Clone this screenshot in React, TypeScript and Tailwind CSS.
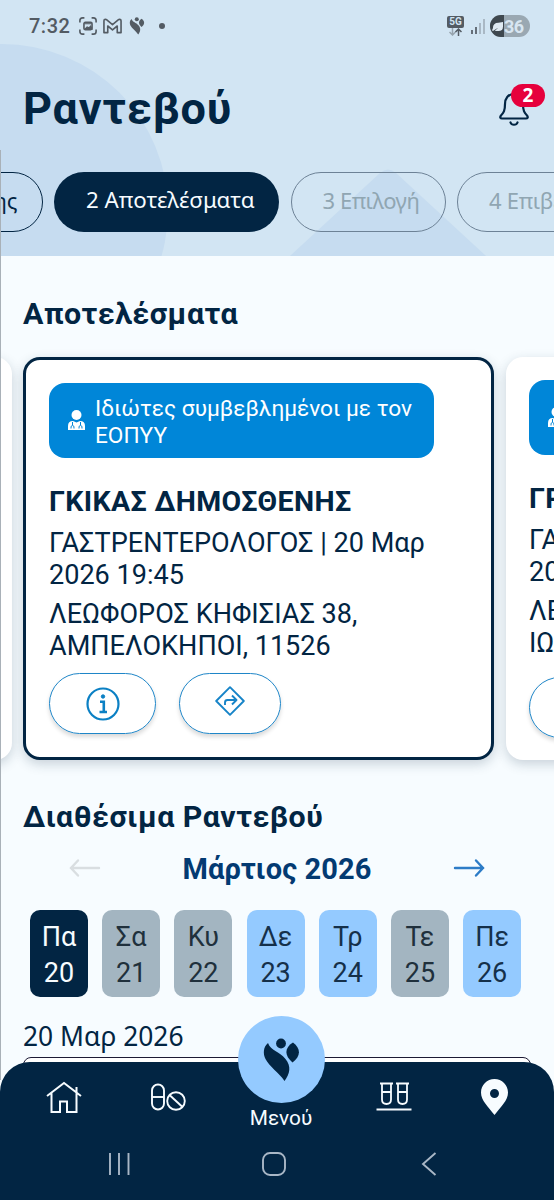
import { clsx } from 'clsx';

const days = [
	{ name: 'Πα', date: 20, state: 'selected' },
	{ name: 'Σα', date: 21, state: 'disabled' },
	{ name: 'Κυ', date: 22, state: 'disabled' },
	{ name: 'Δε', date: 23, state: 'free' },
	{ name: 'Τρ', date: 24, state: 'free' },
	{ name: 'Τε', date: 25, state: 'disabled' },
	{ name: 'Πε', date: 26, state: 'free' },
];

function Logo({ className }: { className: string }) {
	return (
		<svg viewBox="0 0 37 44" className={className} fill="currentColor">
			<circle cx="18" cy="5.500" r="4.900" />
			<path d="M5 5C0 9 0 16 2.500 21c4 8 13 13 19 22C27 36 28.500 28 22.500 21 16 13 8 13 5 5Z" />
			<path d="M30 4.500c-8.500 5-9 13-.5 20 8.500-6.500 8.500-14 .5-20Z" />
		</svg>
	);
}

function StatusBar() {
	return (
		<div className="flex h-[52px] items-center pl-[29px] pr-[24px] text-[#535b63]">
			<span className="w-[50px] text-[20px] font-medium leading-6 tracking-[0.500px]">7:32</span>
			<svg viewBox="0 0 20 20" className="h-[20px] w-[18px]" fill="none" stroke="currentColor" strokeWidth="1.8">
				<path d="M1 6V4q0-3 3-3h2M14 1h2q3 0 3 3v2M19 14v2q0 3-3 3h-2M6 19H4q-3 0-3-3v-2" />
				<rect x="5.500" y="6" width="9" height="8" rx="1.500" />
				<path d="M6 7.500h8M6.500 13.500 9 11l2 1 2-2 1.500 3.500Z" fill="currentColor" strokeWidth="1.200" />
			</svg>
			<svg viewBox="0 0 20 16" className="ml-[6px] h-[16px] w-[19px]" fill="none" stroke="currentColor" strokeWidth="1.700" strokeLinejoin="round">
				<path d="M1 15V2.500Q1 1 2.500 1L4 1.500l6 5 6-5L17.500 1Q19 1 19 2.500V15h-4V8l-5 4-5-4v7Z" />
			</svg>
			<Logo className="ml-[7px] h-[18px] w-[16px]" />
			<span className="ml-[14px] size-[6px] rounded-full bg-[#535b63]" />
			<div className="ml-auto flex items-center">
				<div className="flex h-[21px] w-[17px] flex-col items-center">
					<span className="h-[12px] w-[17px] rounded-[2px] bg-[#535b63] text-center text-[10px] font-bold leading-[12px] text-[#d2e5f3]">5G</span>
					<svg viewBox="0 0 13 8" className="h-[8px] w-[13px]" fill="none" strokeWidth="1.500">
						<path d="M3.500 0v7M.5 4l3 3 3-3" stroke="#97a4ae" />
						<path d="M9.500 8V1M6.500 4l3-3 3 3" stroke="currentColor" />
					</svg>
				</div>
				<svg viewBox="0 0 14 15" className="ml-[7px] h-[15px] w-[14px]" strokeWidth="1.700">
					<path d="M1 15v-4M5 15V8" stroke="#535b63" />
					<path d="M9 15V4M13 15V0" stroke="#a3b1bc" />
				</svg>
				<div className="ml-[5px] flex h-[22px] w-[40px] overflow-hidden rounded-full bg-[#9aa8b2]">
					<div className="flex w-[14px] shrink-0 items-center justify-center bg-[#3f484f]">
						<svg viewBox="0 0 12 12" className="size-[11px] shrink-0" fill="#dfeaf2">
							<path d="M12 1v5q0 5-5 5H3l4-4-6 4-1-1 1-2q0-6 6-6Z" />
						</svg>
					</div>
					<span className="text-[18px] font-bold leading-[23px] tracking-[-0.700px] text-[#d8e6f1]">36</span>
				</div>
			</div>
		</div>
	);
}

function Steps() {
	return (
		<div className="mt-[33px] flex h-[60px] gap-[11.500px] font-['Noto_Sans','Open_Sans',sans-serif] text-[22px] leading-[54px]">
			<div className="ml-[-60px] w-[102.500px] shrink-0 rounded-full border-[1.500px] border-[#022543] pr-[24px] text-right text-[#022543]">ης</div>
			<div className="w-[225px] shrink-0 whitespace-nowrap rounded-full bg-[#022543] pl-[32px] pt-px text-[22.300px] text-[#f7fcff]">2 Αποτελέσματα</div>
			<div className="w-[155px] shrink-0 whitespace-nowrap rounded-full border border-[#6d8296] pl-[31px] tracking-[-0.450px] text-[#90a6b2]">3 Επιλογή</div>
			<div className="w-[200px] shrink-0 whitespace-nowrap rounded-full border border-[#6d8296] pl-[31px] tracking-[-0.300px] text-[#90a6b2]">4 Επιβεβαίωση</div>
		</div>
	);
}

function Header() {
	return (
		<header className="relative h-[256px] overflow-hidden bg-[#d2e5f3]">
			<svg viewBox="0 0 554 256" className="absolute inset-0 h-[256px] w-[554px]" fill="#c6dcf0">
				<circle cx="2" cy="210" r="166" />
				<path d="M290 256 380 173q8-7 16 0l90 83Z" />
			</svg>
			<div className="relative">
				<StatusBar />
				<div className="mt-[27px] flex h-[60px] items-center justify-between pl-[23px]">
					<h1 className="text-[45px] font-bold leading-[60px] tracking-[0.800px] text-[#022543]">Ραντεβού</h1>
					<div className="relative h-[34px] w-[55px]">
						<svg viewBox="0 0 30 34" className="h-[34px] w-[30px]" fill="none" stroke="#022543" strokeWidth="2.200" strokeLinecap="round">
							<path d="M15 2C9 2 6 6.500 6 12c0 7-1.500 8.500-4 11.500-1.500 2-.5 3 1 3h24c1.500 0 2.500-1 1-3-2.500-3-4-4.500-4-11.500 0-5.500-3-10-9-10ZM11.500 30.500c1 3 6 3 7 0" />
						</svg>
						<span className="absolute left-[12px] top-[-8px] h-[23px] w-[34px] rounded-full bg-[#e6003c] text-center font-['Noto_Sans',sans-serif] text-[19px] font-bold leading-[22px] text-white">2</span>
					</div>
				</div>
				<Steps />
			</div>
		</header>
	);
}

function Badge() {
	return (
		<div className="flex h-[75px] w-[385px] rounded-[16px] bg-[#0086d8] pl-[18px] pt-[13px] text-white">
			<svg viewBox="0 0 19 21" className="mt-[14px] h-[21px] w-[19px] shrink-0" fill="white">
				<circle cx="9.500" cy="5" r="5" />
				<path d="M1 20v-4q0-5 5-5l3.500 1.500L13 11q5 0 5 5v4Z" />
				<path d="M5.500 12v3M4 18.500q-.5-3 1.500-3t1.500 3M13.500 12v3M12 18.500q-.5-3 1.500-3t1.500 3" stroke="#0086d8" strokeWidth="1" fill="none" />
			</svg>
			<p className="ml-[9px] whitespace-nowrap text-[22.650px] leading-[26.500px]">
				Ιδιώτες συμβεβλημένοι με τον
				<br />
				ΕΟΠΥΥ
			</p>
		</div>
	);
}

type CardProps = { name: string; details: string[]; address: string[]; selected?: boolean };

function DoctorCard({ name, details, address, selected }: CardProps) {
	return (
		<div
			className={clsx(
				'h-[403px] w-[471px] shrink-0 whitespace-nowrap rounded-[17px] bg-white text-[#022543] shadow-[0_4px_12px_rgba(30,60,80,0.22)]',
				selected ? 'border-3 border-[#022543] pl-[23px] pt-[23px]' : 'pl-[23px] pt-[23px]',
			)}
		>
			<Badge />
			<h3 className="mt-[28px] text-[28.500px] font-bold leading-[32px] tracking-[0.380px]">{name}</h3>
			<p className="mt-[9px] text-[27.050px] leading-[32px]">
				{details[0]}
				<br />
				{details[1]}
			</p>
			<p className="mt-[7px] text-[27.050px] leading-[32px]">
				{address[0]}
				<br />
				{address[1]}
			</p>
			<div className={clsx('flex gap-[23px]', selected ? 'mt-[11px]' : 'mt-[18px]')}>
				<div className="flex h-[61px] w-[107px] items-center justify-center rounded-full border-[1.500px] border-[#1f86c8] shadow-[0_3px_4px_rgba(0,0,0,0.15)]">
					<svg viewBox="0 0 34 34" className="size-[34px]" fill="none" stroke="#0b80c4" strokeWidth="2.200">
						<circle cx="17" cy="17" r="15.500" />
						<circle cx="17" cy="9.500" r="1.700" fill="#0b80c4" strokeWidth="1" />
						<path d="M14 14.800h3.800v10M13.500 25h7.500" strokeWidth="2.600" />
					</svg>
				</div>
				<div className="flex h-[61px] w-[102px] items-center justify-center rounded-full border-[1.500px] border-[#1f86c8] pb-[5px] shadow-[0_3px_4px_rgba(0,0,0,0.15)]">
					<svg viewBox="0 0 30 30" className="size-[30px]" fill="none" stroke="#1784c8" strokeWidth="1.900" strokeLinejoin="round">
						<path d="M15 1.200 28.800 15 15 28.800 1.200 15Z" />
						<path d="M10 19v-2.500q0-2.500 2.500-2.500H21M17 9.500l4.500 4.500-4.500 4.500" />
					</svg>
				</div>
			</div>
		</div>
	);
}

function Calendar() {
	return (
		<>
			<div className="mt-[16px] flex h-[36px] items-center justify-between pl-[69px] pr-[69px]">
				<svg viewBox="0 0 32 20" className="mb-[3px] h-[20px] w-[32px]" fill="none" stroke="#d9dee1" strokeWidth="2.400" strokeLinecap="round">
					<path d="M30 10H2M9 2.500 2 10l7 7.500" />
				</svg>
				<h2 className="text-[29px] font-bold leading-[36px] tracking-[0.100px] text-[#033a72]">Μάρτιος 2026</h2>
				<svg viewBox="0 0 32 20" className="mb-[3px] h-[20px] w-[32px]" fill="none" stroke="#2d7cc7" strokeWidth="2.400" strokeLinecap="round">
					<path d="M2 10h28M23 2.500l7 7.500-7 7.500" />
				</svg>
			</div>
			<div className="ml-[30px] mt-[23px] flex gap-[14.200px]">
				{days.map((day) => (
					<div
						key={day.date}
						className={clsx(
							'h-[87px] w-[58px] rounded-[10px] pt-[9px] text-center text-[27px] leading-[36px]',
							day.state === 'selected' && 'bg-[#022543] text-[#f7fcff]',
							day.state === 'disabled' && 'bg-[#a3b5c1] text-[#20303c]',
							day.state === 'free' && 'bg-[#94caff] text-[#15304a]',
						)}
					>
						<div>{day.name}</div>
						<div>{day.date}</div>
					</div>
				))}
			</div>
		</>
	);
}

function BottomNav() {
	return (
		<nav className="absolute bottom-0 left-0 h-[138px] w-[554px] rounded-t-[30px] bg-[#022543] text-[#f7fcff]">
			<div className="flex h-[66px] items-start pl-[46px] pt-[17px]">
				<svg viewBox="0 0 36 34" className="mt-[1px] h-[34px] w-[36px]" fill="none" stroke="currentColor" strokeWidth="2">
					<path d="M1 16 18 3l17 13M5.500 13v19H14V21.500h7V32h9.500V13M30.500 12V7" />
				</svg>
				<svg viewBox="0 0 36 28" className="ml-[68px] mt-[4px] h-[28px] w-[36px]" fill="none" stroke="currentColor" strokeWidth="1.900">
					<rect x="2" y="1.500" width="12" height="25" rx="6" />
					<path d="M2 14h12" />
					<circle cx="26" cy="18" r="8.800" />
					<path d="m19.500 12 13 12" />
				</svg>
				<div className="ml-[51px] mt-[-63px] flex w-[88px] flex-col items-center">
					<div className="flex size-[87px] items-center justify-center rounded-full bg-[#94caff] text-[#022543]">
						<Logo className="h-[44px] w-[37px]" />
					</div>
					<span className="mt-[3px] text-[20.800px] leading-[24px]">Μενού</span>
				</div>
				<svg viewBox="0 0 36 30" className="ml-[51px] mt-[2px] h-[30px] w-[36px]" fill="none" stroke="currentColor" strokeWidth="1.800">
					<path d="M4 2.500h13M20 2.500h13M6 2.500v16q0 4.500 4.500 4.500t4.500-4.500v-16M22 2.500v16q0 4.500 4.500 4.500t4.500-4.500v-16M6 11h9M22 11h9M.5 28.500h35" />
				</svg>
				<svg viewBox="0 0 27 36" className="ml-[69px] h-[36px] w-[27px]" fill="currentColor" fillRule="evenodd">
					<path d="M13.500 0C6 0 0 6 0 13.500c0 8 7 14 13.500 22.500C20 27.500 27 21.500 27 13.500 27 6 21 0 13.500 0Zm0 10a4.500 4.500 0 1 1 0 9 4.500 4.500 0 0 1 0-9Z" />
				</svg>
			</div>
			<div className="mt-[24px] flex h-[24px] items-center pl-[108px]">
				<svg viewBox="0 0 22 24" className="h-[24px] w-[22px]" stroke="#a9b7c6" strokeWidth="1.900">
					<path d="M2 1v22M11 1v22M20.500 1v22" />
				</svg>
				<svg viewBox="0 0 24 24" className="ml-[132px] size-[24px]" fill="none" stroke="#a9b7c6" strokeWidth="1.900">
					<rect x="1" y="1" width="22" height="22" rx="7" />
				</svg>
				<svg viewBox="0 0 16 24" className="ml-[135px] h-[24px] w-[16px]" fill="none" stroke="#a9b7c6" strokeWidth="1.900">
					<path d="M14.500 1 2 12l12.500 11" />
				</svg>
			</div>
		</nav>
	);
}

export default function App() {
	return (
		<div className="relative h-[1200px] w-[554px] overflow-hidden bg-[#f7fcff] font-['Roboto',sans-serif] text-[#022543]">
			<Header />
			<h2 className="ml-[23px] mt-[40px] text-[30.400px] font-bold leading-[36px] tracking-[0.500px]">Αποτελέσματα</h2>
			<div className="ml-[-459px] mt-[25px] flex">
				<div className="mr-[11px] h-[403px] w-[471px] shrink-0 rounded-[17px] bg-white shadow-[0_4px_12px_rgba(30,60,80,0.22)]" />
				<DoctorCard
					selected
					name="ΓΚΙΚΑΣ ΔΗΜΟΣΘΕΝΗΣ"
					details={['ΓΑΣΤΡΕΝΤΕΡΟΛΟΓΟΣ | 20 Μαρ', '2026 19:45']}
					address={['ΛΕΩΦΟΡΟΣ ΚΗΦΙΣΙΑΣ 38,', 'ΑΜΠΕΛΟΚΗΠΟΙ, 11526']}
				/>
				<div className="w-[12px] shrink-0" />
				<DoctorCard name="ΓΡ" details={['ΓΑΣ', '2026']} address={['ΛΕΩ', 'ΙΩΑ']} />
			</div>
			<h2 className="ml-[23px] mt-[39px] text-[30.300px] font-bold leading-[36px] tracking-[0.500px]">Διαθέσιμα Ραντεβού</h2>
			<Calendar />
			<p className="ml-[23px] mt-[24px] font-['Noto_Sans','Open_Sans',sans-serif] text-[26.400px] leading-[30px]">20 Μαρ 2026</p>
			<div className="ml-[23px] mt-[6px] h-[80px] w-[508px] rounded-[8px] border border-[#1c1a35] bg-white" />
			<div className="absolute left-0 top-[150px] h-[930px] w-px bg-[#a9b1b8]" />
			<BottomNav />
		</div>
	);
}
